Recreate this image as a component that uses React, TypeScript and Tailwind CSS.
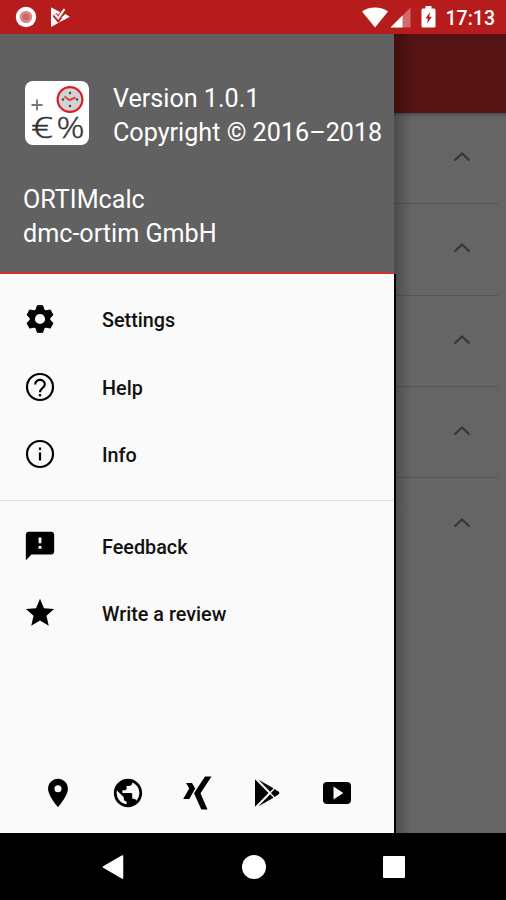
import type { ReactNode } from 'react';
import { MdFeedback, MdPlace, MdPublic, MdStar } from 'react-icons/md';

function StatusBar() {
  return (
    <header className="flex h-[34px] shrink-0 items-center bg-[#b71c1c] text-white">
      <svg className="ml-[15px] h-[22px] w-[22px]" viewBox="0 0 22 22">
        <circle cx="11" cy="11" r="10.2" fill="#fff" />
        <circle cx="11" cy="11" r="6.2" fill="#dd8a8a" />
        <circle cx="11" cy="11" r="3.6" fill="#cc6a6a" />
      </svg>
      <svg className="ml-[13px] h-[22px] w-[22px]" viewBox="0 0 22 22">
        <path d="M1 1.500 19.500 10.800 1 21z" fill="#fff" />
        <path d="m4.500 8.500 3.700 4.500L15.500 3.500" fill="none" stroke="#b71c1c" strokeWidth="5" />
        <path d="M1 1.500 6 4.300 4.500 8 1 9.500z" fill="#fff" />
        <path d="m5 8.500 3.200 3.800L14.500 3" fill="none" stroke="#fff" strokeWidth="2.200" />
        <path d="m15.500 8 4 2.800L13.500 14l-2-2.500z" fill="#fff" />
      </svg>
      <div className="flex-1" />
      <svg className="h-[21px] w-[28px]" viewBox="0 0 28 21">
        <path d="M14 20.500 1 4.500C4.500 2 9 .5 14 .5s9.500 1.500 13 4z" fill="#fff" />
      </svg>
      <svg className="ml-px h-[21px] w-[21px]" viewBox="0 0 21 21">
        <path d="M20.500 .5v20H.5z" fill="#fff" fillOpacity=".35" />
        <path d="M12.500 8.500v12H.5z" fill="#fff" />
      </svg>
      <svg className="ml-[10px] h-[22px] w-[15px]" viewBox="0 0 15 22">
        <path d="M4.500 0h6v2.500H13a1.500 1.500 0 0 1 1.500 1.500v16a1.500 1.500 0 0 1-1.500 1.500H2A1.500 1.500 0 0 1 .5 20V4A1.500 1.500 0 0 1 2 2.500h2.500z" fill="#fff" />
        <path d="M9 6 4.500 12.500h2.400L6.200 17.500l4.600-6.700H8.300z" fill="#b71c1c" />
      </svg>
      <span className="mr-[11px] ml-[10px] pt-[3px] text-[19.5px] leading-none font-medium">17:13</span>
    </header>
  );
}

function AppLogo() {
  return (
    <svg className="h-[64px] w-[64px] shrink-0" viewBox="0 0 64 64">
      <rect width="64" height="64" rx="8" fill="#fff" />
      <path d="M6.500 24h11M12 18.500v11" stroke="#777" strokeWidth="1.800" />
      <circle cx="45" cy="18.500" r="12.400" fill="#d2d2d2" stroke="#d81f26" strokeWidth="2.200" />
      <g fill="#444">
        <circle cx="45" cy="12" r="1.200" />
        <circle cx="45" cy="25" r="1.200" />
        <circle cx="38" cy="18.500" r="1.200" />
        <circle cx="52" cy="18.500" r="1.200" />
      </g>
      <path d="m39.500 15.500 5 3.500 6-2.500" fill="none" stroke="#d9453f" strokeWidth="2" />
      <text x="6" y="57" fontSize="28.500" fontWeight="300" fill="#333" stroke="#333" strokeWidth=".4" fontFamily="Open Sans, sans-serif" textLength="22" lengthAdjust="spacingAndGlyphs">€</text>
      <text x="31.500" y="57" fontSize="28.500" fontWeight="300" fill="#333" stroke="#333" strokeWidth=".4" fontFamily="Open Sans, sans-serif" textLength="28" lengthAdjust="spacingAndGlyphs">%</text>
    </svg>
  );
}

function SettingsIcon() {
  return (
    <svg className="h-[34px] w-[34px]" viewBox="0 0 34 34" fill="none" stroke="#000">
      <circle cx="17" cy="17" r="7.700" strokeWidth="5.200" />
      <g fill="#000" strokeWidth="1" strokeLinejoin="round">
        {[0, 60, 120, 180, 240, 300].map((angle) => (
          <path key={angle} d="M12.500 9.500 14.300 3.700h5.400l1.800 5.800z" transform={`rotate(${angle} 17 17)`} />
        ))}
      </g>
    </svg>
  );
}

function HelpIcon() {
  return (
    <svg className="h-[34px] w-[34px]" viewBox="0 0 34 34" fill="none" stroke="#000" strokeWidth="2.200">
      <circle cx="17" cy="17" r="13" />
      <path d="M12.200 14.500c0-6 9.600-6 9.600-.3 0 3.800-4.800 3.800-4.800 8" />
      <path d="M17 24v2.300" />
    </svg>
  );
}

function InfoIcon() {
  return (
    <svg className="h-[34px] w-[34px]" viewBox="0 0 34 34" fill="none" stroke="#000" strokeWidth="2.200">
      <circle cx="17" cy="17" r="13" />
      <path d="M17 10.500v2.500M17 15.500v8" />
    </svg>
  );
}

function MenuItem({ icon, label }: { icon: ReactNode; label: string }) {
  return (
    <li className="flex h-[67.5px] items-center pl-[23px]">
      {icon}
      <span className="ml-[45px] pt-[4px] text-[19.800px] font-medium text-[#111]">{label}</span>
    </li>
  );
}

function XingIcon() {
  return (
    <svg className="h-[34px] w-[34px]" viewBox="0 0 34 34">
      <path d="M24 .5h6.500L19.500 17.200 26.500 33.500h-6.200L13 17.200z" />
      <path d="M5 7h6l3.200 5.500L8.300 23H2.200l6-10.500z" />
    </svg>
  );
}

function PlayStoreIcon() {
  return (
    <svg className="h-[34px] w-[34px]" viewBox="0 0 34 34">
      <path d="M5 3.200 18.500 17 5 30.800z" />
      <path d="M8.500 3.800 23.500 12.300l-3.300 3.500zM8.500 30.200 23.500 21.700l-3.300-3.500z" />
      <path d="m24.500 12.900 4.300 2.900q1.300 1.200 0 2.400l-4.300 2.900-3.500-4.100z" />
    </svg>
  );
}

function VideoIcon() {
  return (
    <svg className="h-[34px] w-[34px]" viewBox="0 0 34 34">
      <path fillRule="evenodd" d="M7 6h20q4 0 4 4v14q0 4-4 4H7q-4 0-4-4V10q0-4 4-4zm6.500 4.500v13l9.800-6.500z" />
    </svg>
  );
}

function Drawer() {
  return (
    <aside className="flex w-[394px] shrink-0 flex-col bg-[#fafafa]">
      <div className="h-[240px] border-b-2 border-[#d32f2f] bg-[#616161] pt-[47px] text-[25.150px] leading-[34px] text-white">
        <div className="flex pl-[25px]">
          <AppLogo />
          <p className="ml-[24px] translate-y-px whitespace-nowrap">
            Version 1.0.1
            <br />
            Copyright © 2016–2018
          </p>
        </div>
        <p className="mt-[34px] pl-[23px]">
          ORTIMcalc
          <br />
          dmc-ortim GmbH
        </p>
      </div>
      <ul className="border-b border-[#dedede] pt-[11.5px] pb-[11.5px]">
        <MenuItem icon={<SettingsIcon />} label="Settings" />
        <MenuItem icon={<HelpIcon />} label="Help" />
        <MenuItem icon={<InfoIcon />} label="Info" />
      </ul>
      <ul className="pt-[11.5px]">
        <MenuItem icon={<MdFeedback size={34} />} label="Feedback" />
        <MenuItem icon={<MdStar size={34} />} label="Write a review" />
      </ul>
      <div className="mt-auto mb-[23px] flex justify-between pr-[40px] pl-[41px]">
        <MdPlace size={34} />
        <MdPublic size={34} />
        <XingIcon />
        <PlayStoreIcon />
        <VideoIcon />
      </div>
    </aside>
  );
}

// dimmed part of the screen next to the open drawer
function Backdrop() {
  return (
    <div className="relative flex flex-1 flex-col bg-[#656565]">
      <div className="h-[79px] bg-[#551313]" />
      <div className="h-[4px] bg-linear-to-b from-[#4c4c4c] to-[#656565]" />
      <ul className="-mt-[4px] mr-[8px]">
        {[0, 1, 2, 3, 4].map((row) => (
          <li key={row} className="flex h-[91.3px] items-center justify-end border-b border-[#555] pr-[27px] pb-[2px] last:border-0">
            <svg className="h-[12px] w-[18px]" viewBox="0 0 18 12">
              <path d="m1.500 9.500 7.500-7 7.500 7" fill="none" stroke="#363636" strokeWidth="2.200" />
            </svg>
          </li>
        ))}
      </ul>
      <div className="absolute inset-y-0 left-0 w-[18px] bg-linear-to-r from-black/25 to-transparent" />
      <div className="absolute top-[240px] bottom-0 left-0 w-[2px] bg-black" />
    </div>
  );
}

function NavBar() {
  return (
    <nav className="flex h-[67px] shrink-0 items-center justify-between bg-black pr-[101px] pl-[101px]">
      <svg className="h-[26px] w-[24px]" viewBox="0 0 24 26">
        <path d="M21.500 2v22L2.500 13z" fill="#fff" stroke="#fff" strokeWidth="1.500" strokeLinejoin="round" />
      </svg>
      <div className="h-[24px] w-[24px] rounded-full bg-white" />
      <div className="h-[22px] w-[22px] rounded-[1px] bg-white" />
    </nav>
  );
}

export default function App() {
  return (
    <main className="flex h-[900px] w-[506px] flex-col overflow-hidden font-[Roboto,sans-serif]">
      <StatusBar />
      <div className="flex flex-1">
        <Drawer />
        <Backdrop />
      </div>
      <NavBar />
    </main>
  );
}
